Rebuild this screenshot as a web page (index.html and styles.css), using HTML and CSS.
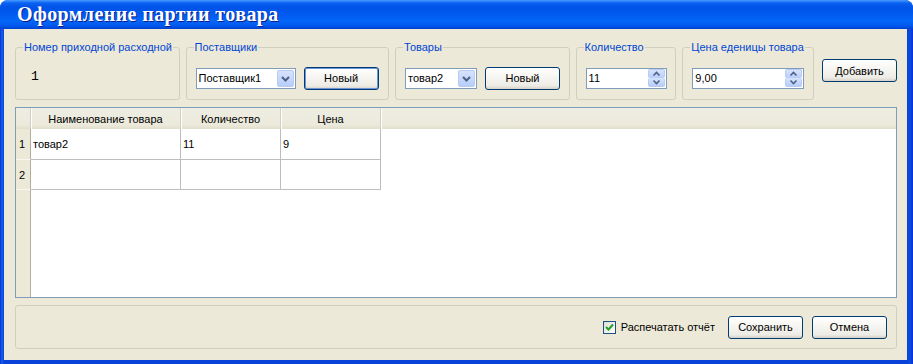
FILE: index.html
```html
<!DOCTYPE html>
<html lang="ru">
<head>
    <meta charset="UTF-8">
    <title>Оформление партии товара</title>
    <link rel="stylesheet" href="styles.css">
</head>
<body>
    <div class="window">
        <div class="titlebar">Оформление партии товара</div>
        <div class="client">
            <div class="toolbar">
                <fieldset class="group g-number">
                    <legend>Номер приходной расходной</legend>
                    <span class="doc-number">1</span>
                </fieldset>
                <fieldset class="group g-supplier">
                    <legend>Поставщики</legend>
                    <div class="combo w-supplier">
                        <span class="combo-text">Поставщик1</span>
                        <span class="drop"><svg width="15" height="17" viewBox="0 0 15 17"><polyline points="4,7 7.5,10.5 11,7" fill="none" stroke="#4D6185" stroke-width="2"/></svg></span>
                    </div>
                    <button class="btn default">Новый</button>
                </fieldset>
                <fieldset class="group g-goods">
                    <legend>Товары</legend>
                    <div class="combo w-goods">
                        <span class="combo-text">товар2</span>
                        <span class="drop"><svg width="15" height="17" viewBox="0 0 15 17"><polyline points="4,7 7.5,10.5 11,7" fill="none" stroke="#4D6185" stroke-width="2"/></svg></span>
                    </div>
                    <button class="btn">Новый</button>
                </fieldset>
                <fieldset class="group g-qty">
                    <legend>Количество</legend>
                    <div class="spin w-qty">
                        <span class="combo-text">11</span>
                        <span class="spin-btns">
                            <span class="spin-up"><svg width="15" height="8" viewBox="0 0 15 8"><polyline points="4.5,5.5 7.5,2.5 10.5,5.5" fill="none" stroke="#4D6185" stroke-width="1.6"/></svg></span>
                            <span class="spin-down"><svg width="15" height="8" viewBox="0 0 15 8"><polyline points="4.5,2.5 7.5,5.5 10.5,2.5" fill="none" stroke="#4D6185" stroke-width="1.6"/></svg></span>
                        </span>
                    </div>
                </fieldset>
                <fieldset class="group g-price">
                    <legend>Цена еденицы товара</legend>
                    <div class="spin w-price">
                        <span class="combo-text">9,00</span>
                        <span class="spin-btns">
                            <span class="spin-up"><svg width="15" height="8" viewBox="0 0 15 8"><polyline points="4.5,5.5 7.5,2.5 10.5,5.5" fill="none" stroke="#4D6185" stroke-width="1.6"/></svg></span>
                            <span class="spin-down"><svg width="15" height="8" viewBox="0 0 15 8"><polyline points="4.5,2.5 7.5,5.5 10.5,2.5" fill="none" stroke="#4D6185" stroke-width="1.6"/></svg></span>
                        </span>
                    </div>
                </fieldset>
                <button class="btn add">Добавить</button>
            </div>

            <div class="grid">
                <div class="hcell corner"></div>
                <div class="hcell">Наименование товара</div>
                <div class="hcell">Количество</div>
                <div class="hcell">Цена</div>
                <div class="hcell fill"></div>

                <div class="rowhead">1</div>
                <div class="cell">товар2</div>
                <div class="cell">11</div>
                <div class="cell">9</div>
                <div class="empty"></div>

                <div class="rowhead">2</div>
                <div class="cell"></div>
                <div class="cell"></div>
                <div class="cell"></div>
                <div class="empty"></div>

                <div class="rowhead blank"></div>
                <div class="empty rest"></div>
            </div>

            <div class="footer">
                <label class="check">
                    <span class="box"><svg width="11" height="11" viewBox="0 0 11 11"><polyline points="2,5 4.5,7.5 9,2.5" fill="none" stroke="#21A121" stroke-width="2"/></svg></span>
                    Распечатать отчёт
                </label>
                <button class="btn">Сохранить</button>
                <button class="btn">Отмена</button>
            </div>
        </div>
    </div>
</body>
</html>
```

FILE: styles.css
```css
body {
    margin: 0;
    background-color: #fff;
    font-family: "Liberation Sans", Arial, sans-serif;
    font-size: 11px;
    color: #000;
}
.window {
    width: 913px;
    height: 364px;
    display: flex;
    flex-direction: column;
    background: linear-gradient(to right, #0831D9 0, #1660EA 2px, #0842D8 4px, #0842D8 907px, #0A4BE0 910px, #0831D9 913px);
    border-radius: 8px 8px 0 0;
    overflow: hidden;
}
.titlebar {
    height: 29px;
    line-height: 29px;
    padding-left: 17px;
    color: #fff;
    font-family: "Liberation Serif", "Times New Roman", serif;
    font-weight: bold;
    font-size: 20px;
    letter-spacing: 0.4px;
    text-shadow: 1px 1px 0 #0A1E8C;
    background: linear-gradient(to bottom, #4A9BFF 0, #0A62F2 3px, #0053E6 7px, #0058EE 13px, #0466F8 21px, #0058EC 26px, #0040CE 29px);
}
.client {
    flex: 1;
    margin: 0 6px 5px 4px;
    background-color: #ECE9D8;
    padding: 12px 10px 11px 11px;
    display: flex;
    flex-direction: column;
}

/* Top row with group boxes */
.toolbar {
    display: flex;
    align-items: flex-start;
    gap: 6px;
}
.group {
    margin: 0;
    padding: 12px 9px 9px 9px;
    border: 1px solid #D0D0BF;
    border-radius: 3px;
    display: flex;
    align-items: center;
    gap: 8px;
    height: 59px;
    box-sizing: border-box;
    min-width: 0;
}
.group legend {
    color: #0046D5;
    padding: 0 1px;
    margin-left: -2px;
    line-height: 13px;
    font-size: 11px;
    white-space: nowrap;
}
.g-number { width: 165px; }
.g-supplier { width: 204px; }
.g-goods { width: 175px; }
.g-qty { width: 101px; }
.g-price { width: 132px; }
.doc-number {
    font-family: "Liberation Mono", "Courier New", monospace;
    font-size: 13px;
    margin-left: 6px;
    margin-top: -3px;
}

.combo, .spin {
    height: 21px;
    box-sizing: border-box;
    border: 1px solid #7F9DB9;
    background-color: #fff;
    display: flex;
    align-items: center;
    justify-content: space-between;
    flex-shrink: 0;
}
.combo-text {
    padding-left: 2px;
    font-size: 11px;
}
.w-supplier { width: 100px; }
.w-goods { width: 72px; }
.w-qty { width: 81px; }
.w-price { width: 112px; }
.drop {
    width: 17px;
    height: 17px;
    margin-right: 1px;
    border: 1px solid #B9CBF3;
    border-radius: 2px;
    background: linear-gradient(to bottom, #D6E3FC, #B7CDFA);
    box-sizing: border-box;
    display: flex;
    align-items: center;
    justify-content: center;
}
.spin-btns {
    display: flex;
    flex-direction: column;
    margin-right: 1px;
}
.spin-up, .spin-down {
    width: 15px;
    height: 8px;
    background: linear-gradient(to bottom, #D6E3FC, #B7CDFA);
    border: 1px solid #B9CBF3;
    border-radius: 2px;
    display: flex;
}
.spin-up { border-bottom: none; }
.spin-down { border-top: none; }

.btn {
    width: 75px;
    height: 23px;
    padding: 0;
    flex-shrink: 0;
    font-family: "Liberation Sans", Arial, sans-serif;
    font-size: 11px;
    color: #000;
    border: 1px solid #003C74;
    border-radius: 3px;
    background: linear-gradient(to bottom, #FFFFFF 0, #F7F6F2 40%, #ECEBE5 85%, #D6D0C5 100%);
    cursor: pointer;
}
.btn.default {
    box-shadow: inset 0 0 0 1px #6E94D8;
}
.add {
    margin-top: 18px;
    margin-left: 2px;
}

/* Table grid */
.grid {
    margin-top: 7px;
    height: 191px;
    box-sizing: border-box;
    border: 1px solid #7F9DB9;
    background-color: #fff;
    display: grid;
    grid-template-columns: 15px 150px 100px 100px 1fr;
    grid-template-rows: 21px 31px 30px 1fr;
}
.hcell {
    background: linear-gradient(to bottom, #EEEDE3 0, #EBEADB 80%, #E2DECD 100%);
    border-right: 1px solid #D0CEC0;
    box-shadow: inset 1px 0 0 #fff;
    display: flex;
    align-items: center;
    justify-content: center;
    font-size: 11px;
}
.hcell.corner {
    box-shadow: none;
}
.hcell.fill {
    border-right: none;
}
.rowhead {
    background-color: #ECE9D8;
    border-right: 1px solid #B0AE9F;
    border-bottom: 1px solid #F7F6F0;
    display: flex;
    align-items: center;
    padding-left: 3px;
    font-size: 11px;
}
.rowhead.blank {
    border-bottom: none;
}
.cell {
    border-right: 1px solid #BDBDBD;
    border-bottom: 1px solid #BDBDBD;
    display: flex;
    align-items: center;
    padding-left: 2px;
    font-size: 11px;
}
.empty.rest {
    grid-column: span 4;
}

/* Bottom panel */
.footer {
    margin-top: 7px;
    height: 44px;
    box-sizing: border-box;
    border: 1px solid #D0D0BF;
    border-radius: 3px;
    display: flex;
    align-items: center;
    justify-content: flex-end;
    padding-right: 9px;
    gap: 9px;
}
.check {
    display: flex;
    align-items: center;
    gap: 5px;
    margin-right: 4px;
    font-size: 11px;
}
.box {
    width: 13px;
    height: 13px;
    box-sizing: border-box;
    border: 1px solid #1C5180;
    background: linear-gradient(135deg, #DCDCD7, #fff);
    display: flex;
    align-items: center;
    justify-content: center;
}
```
